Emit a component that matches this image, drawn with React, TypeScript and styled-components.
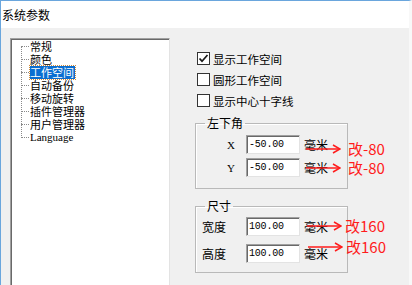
import styled, { createGlobalStyle } from 'styled-components';

const GlobalStyle = createGlobalStyle`
	body {
		margin: 0;
		background: #f0f0f0;
		font-family: 'Noto Sans CJK SC', 'Liberation Sans', sans-serif;
		color: #000;
	}
`;

const Window = styled.div`
	width: 412px;
	height: 285px;
	box-sizing: border-box;
	border-top: 1px solid #6aa6dd;
	border-left: 1px solid #6aa6dd;
	border-right: 3px solid #f8f8f8;
	background: #f0f0f0;
	display: flex;
	flex-direction: column;
	overflow: hidden;
`;

const TitleBar = styled.div`
	height: 27px;
	flex-shrink: 0;
	background: #fff;
	display: flex;
	align-items: center;
	padding-left: 1px;
	font-size: 12px;
	margin-right: -3px;
`;

const Body = styled.div`
	flex: 1;
	display: flex;
	padding: 10px 0 0 9px;
`;

const Tree = styled.div`
	width: 160px;
	box-sizing: border-box;
	background: #fff;
	border-top: 1px solid #a0a0a0;
	border-left: 1px solid #a0a0a0;
	border-right: 1px solid #e3e3e3;
	box-shadow: inset 1px 1px 0 #696969;
	padding-top: 1px;
`;

const TreeList = styled.ul`
	position: relative;
	list-style: none;
	margin: 0;
	padding: 0 0 0 20px;

	&::before {
		content: '';
		position: absolute;
		left: 10px;
		top: 6px;
		bottom: 6px;
		border-left: 1px dotted #8a8a8a;
	}
`;

const TreeItem = styled.li<{ $lang?: boolean }>`
	position: relative;
	height: 13px;
	line-height: 13px;
	font-size: 11px;
	font-family: ${(p) =>
		p.$lang ? "'Liberation Serif', serif" : "'Noto Sans CJK SC', sans-serif"};
	white-space: nowrap;

	&::before {
		content: '';
		position: absolute;
		left: -10px;
		top: 6px;
		width: 8px;
		border-top: 1px dotted #8a8a8a;
	}
`;

const ItemLabel = styled.span<{ $selected?: boolean }>`
	display: inline-block;
	height: 13px;
	line-height: 13px;
	padding: 0 1px 0 0;
	margin-left: -1px;
	box-sizing: border-box;
	background: ${(p) => (p.$selected ? '#0a6ed1' : 'transparent')};
	color: ${(p) => (p.$selected ? '#fff' : '#000')};
	outline: ${(p) => (p.$selected ? '1px dotted #d08a3a' : 'none')};
`;

const Panel = styled.div`
	margin-left: 27px;
	padding-top: 10px;
	display: flex;
	flex-direction: column;
`;

const CheckRow = styled.div`
	height: 21px;
	display: flex;
	align-items: center;
	font-size: 11.5px;
`;

const Box = styled.span`
	width: 13px;
	height: 13px;
	box-sizing: border-box;
	border: 1px solid #333;
	background: #fff;
	margin-right: 3px;
	display: flex;
	align-items: center;
	justify-content: center;
`;

const Group = styled.fieldset<{ $top: number; $pt: number; $pb: number; $gap: number }>`
	width: 153px;
	box-sizing: border-box;
	margin: ${(p) => p.$top}px 0 0 -2px;
	padding: ${(p) => p.$pt}px 6px ${(p) => p.$pb}px 6px;
	border: 1px solid #b9b9b9;
	box-shadow: 1px 1px 0 #fff inset;
	display: flex;
	flex-direction: column;
	gap: ${(p) => p.$gap}px;
	min-inline-size: 0;
`;

const Legend = styled.legend`
	font-size: 12px;
	line-height: 12px;
	padding: 0 2px;
	margin-left: 3px;
`;

const Row = styled.div`
	position: relative;
	height: 19px;
	display: flex;
	align-items: center;
	font-size: 12px;
`;

const Label = styled.span<{ $indent?: number; $serif?: boolean }>`
	width: 44px;
	box-sizing: border-box;
	padding-left: ${(p) => p.$indent ?? 0}px;
	font-family: ${(p) =>
		p.$serif ? "'Liberation Serif', serif" : "'Noto Sans CJK SC', sans-serif"};
	font-size: ${(p) => (p.$serif ? '11px' : '12px')};
`;

const Field = styled.div`
	width: 54px;
	height: 19px;
	box-sizing: border-box;
	background: #fff;
	border-top: 1px solid #a0a0a0;
	border-left: 1px solid #a0a0a0;
	border-right: 1px solid #e3e3e3;
	border-bottom: 1px solid #e3e3e3;
	box-shadow: inset 1px 1px 0 #696969;
	padding: 0 0 0 2px;
	font-family: 'Liberation Mono', monospace;
	font-size: 10px;
	line-height: 17px;
	letter-spacing: -0.2px;
`;

const Unit = styled.span`
	margin-left: 4px;
	font-size: 12px;
`;

const Note = styled.div<{ $dy: number; $left: number }>`
	position: absolute;
	left: ${(p) => p.$left}px;
	top: 50%;
	transform: translateY(calc(-50% + ${(p) => p.$dy}px));
	display: flex;
	align-items: center;
	color: #ff1c1c;
	font-size: 15px;
	line-height: 16px;
	white-space: nowrap;
	pointer-events: none;
`;

const NoteText = styled.span<{ $gap: number }>`
	margin-left: ${(p) => p.$gap}px;
`;

function Check({ checked }: { checked?: boolean }) {
	return (
		<Box>
			{checked && (
				<svg width='11' height='11' viewBox='0 0 11 11'>
					<path d='M1.5 5.5 L4 8.2 L9.5 2' fill='none' stroke='#1a1a1a' strokeWidth='1.7' />
				</svg>
			)}
		</Box>
	);
}

function Annotation({ text, dy, left, gap }: { text: string; dy: number; left: number; gap: number }) {
	return (
		<Note $dy={dy} $left={left}>
			<svg width='35' height='10' viewBox='0 0 35 10'>
				<line x1='0' y1='5' x2='34' y2='5' stroke='#ff1c1c' strokeWidth='1.5' />
				<polyline points='27,1 34,5 27,9' fill='none' stroke='#ff1c1c' strokeWidth='1.5' />
			</svg>
			<NoteText $gap={gap}>{text}</NoteText>
		</Note>
	);
}

const items = ['常规', '颜色', '工作空间', '自动备份', '移动旋转', '插件管理器', '用户管理器'];

export default function App() {
	return (
		<>
			<GlobalStyle />
			<Window>
				<TitleBar>系统参数</TitleBar>
				<Body>
					<Tree>
						<TreeList>
							{items.map((it, i) => (
								<TreeItem key={it}>
									<ItemLabel $selected={i === 2}>{it}</ItemLabel>
								</TreeItem>
							))}
							<TreeItem $lang>
								<ItemLabel>Language</ItemLabel>
							</TreeItem>
						</TreeList>
					</Tree>
					<Panel>
						<CheckRow>
							<Check checked />
							显示工作空间
						</CheckRow>
						<CheckRow>
							<Check />
							圆形工作空间
						</CheckRow>
						<CheckRow>
							<Check />
							显示中心十字线
						</CheckRow>
						<Group $top={6} $pt={6} $pb={11} $gap={4}>
							<Legend>左下角</Legend>
							<Row>
								<Label $indent={25} $serif>X</Label>
								<Field>-50.00</Field>
								<Unit>毫米</Unit>
								<Annotation text='改-80' dy={4} left={104} gap={7} />
							</Row>
							<Row>
								<Label $indent={25} $serif>Y</Label>
								<Field>-50.00</Field>
								<Unit>毫米</Unit>
								<Annotation text='改-80' dy={0} left={104} gap={7} />
							</Row>
						</Group>
						<Group $top={11} $pt={5} $pb={9} $gap={8}>
							<Legend>尺寸</Legend>
							<Row>
								<Label>宽度</Label>
								<Field>100.00</Field>
								<Unit>毫米</Unit>
								<Annotation text='改160' dy={-1} left={105} gap={3} />
							</Row>
							<Row>
								<Label>高度</Label>
								<Field>100.00</Field>
								<Unit>毫米</Unit>
								<Annotation text='改160' dy={-7} left={106} gap={3} />
							</Row>
						</Group>
					</Panel>
				</Body>
			</Window>
		</>
	);
}
